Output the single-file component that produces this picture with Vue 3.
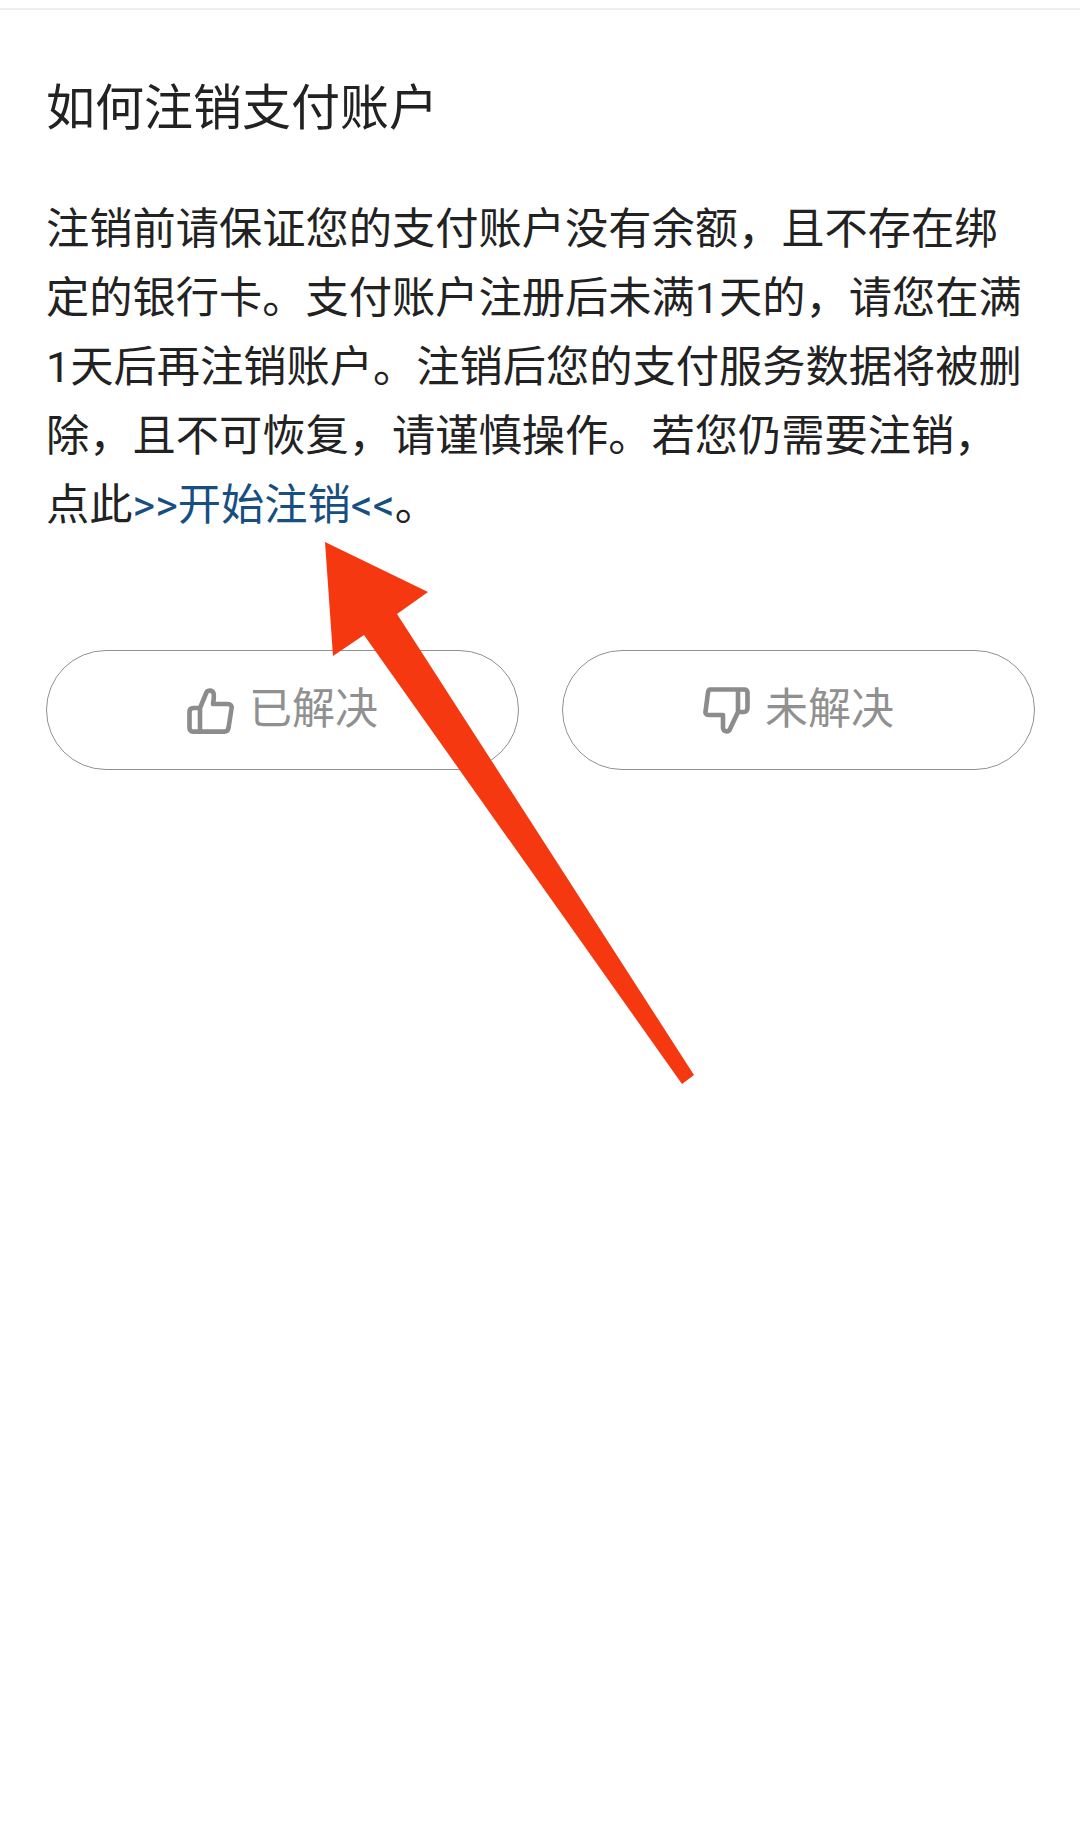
<script setup>
const paragraph = '注销前请保证您的支付账户没有余额，且不存在绑定的银行卡。支付账户注册后未满1天的，请您在满1天后再注销账户。注销后您的支付服务数据将被删除，且不可恢复，请谨慎操作。若您仍需要注销，点此'
</script>

<template>
  <div class="page">
    <div class="top-line"></div>

    <div class="content">
      <h1 class="title">如何注销支付账户</h1>
      <p class="body">{{ paragraph }}<a class="link">&gt;&gt;开始注销&lt;&lt;</a>。</p>

      <div class="feedback">
        <button class="btn">
          <svg class="icon" viewBox="0 0 47 47" fill="none">
            <path d="M13 21 L19 6.5 C20 3 25 2.5 26.5 6 C27.5 9 26.5 13 26 17 H41 C43.5 17 45 19 44.6 21 L41.5 41 C41 43.5 39.5 44.6 37.5 44.6 H6 C3.5 44.6 2.5 43 2.5 41 V25 C2.5 22.5 4 21 6.5 21 Z M13 21 V44.6" />
          </svg>
          <span class="btn-text">已解决</span>
        </button>
        <button class="btn">
          <svg class="icon" viewBox="0 0 47 47" fill="none">
            <path d="M7 2.5 H41 C43.5 2.5 44.5 4 44.5 6 V21 C44.5 23.5 43 25 41 25 H35 L27 42 C25.5 45.5 20.5 45 20 41 L20 28 H5.5 C3 28 2 26 2.6 24 L5 5.5 C5.3 3.5 6 2.5 7 2.5 Z M35 2.5 V25" />
          </svg>
          <span class="btn-text">未解决</span>
        </button>
      </div>
    </div>

    <!-- red annotation arrow drawn over the page -->
    <svg class="arrow" viewBox="0 0 1080 1824">
      <polygon points="325,542 428,592 397,614 694,1075 682,1084 364,635 333,656" />
    </svg>
  </div>
</template>

<style scoped>
.page {
  position: relative;
  height: 1824px;
  background: #fff;
  font-family: Roboto, "Noto Sans CJK SC", sans-serif;
  overflow: hidden;
}

.top-line {
  height: 2px;
  margin-top: 8px;
  background: #eeeeee;
}

.content {
  padding: 69px 45px 0 46px;
}

.title {
  margin: 0;
  font-size: 49px;
  font-weight: 400;
  line-height: 60px;
  color: #222;
}

.body {
  margin: 56px 0 0;
  font-size: 43.25px;
  line-height: 69px;
  color: #222;
}

.link {
  color: #174f82;
}

.feedback {
  display: flex;
  gap: 43px;
  margin-top: 110px;
}

.btn {
  flex: 1;
  height: 120px;
  display: flex;
  align-items: center;
  justify-content: center;
  gap: 15px;
  padding: 0;
  background: #fff;
  border: 1px solid #919191;
  border-radius: 60px;
  font-family: inherit;
  font-size: 43px;
  color: #909090;
}

.btn-text {
  line-height: 50px;
  margin-top: -2px;
}

.icon {
  width: 47px;
  height: 47px;
  flex-shrink: 0;
}

.icon path {
  stroke: #8c8c8c;
  stroke-width: 4.6;
  stroke-linejoin: round;
}

.arrow {
  position: absolute;
  top: 0;
  left: 0;
  width: 1080px;
  height: 1824px;
  pointer-events: none;
}

.arrow polygon {
  fill: #f5380f;
}
</style>
